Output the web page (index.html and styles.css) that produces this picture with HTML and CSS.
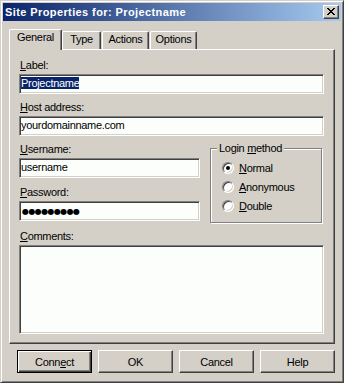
FILE: index.html
```html
<!DOCTYPE html>
<html lang="en">
<head>
    <meta charset="UTF-8">
    <title>Site Properties for: Projectname</title>
    <link rel="stylesheet" href="styles.css">
</head>
<body>
    <div class="window">
        <div class="titlebar">
            <span class="title">Site Properties for: Projectname</span>
            <span class="close-btn">
                <svg width="8" height="7" viewBox="0 0 8 7" shape-rendering="crispEdges">
                    <path d="M0 0h2v1H0z M6 0h2v1H6z M1 1h2v1H1z M5 1h2v1H5z M2 2h4v1H2z M3 3h2v1H3z M2 4h4v1H2z M1 5h2v1H1z M5 5h2v1H5z M0 6h2v1H0z M6 6h2v1H6z" fill="#000"/>
                </svg>
            </span>
        </div>

        <div class="tabs">
            <div class="tab active tab-general">General</div>
            <div class="tab tab-type">Type</div>
            <div class="tab tab-actions">Actions</div>
            <div class="tab tab-options">Options</div>
        </div>

        <div class="panel">
            <div class="field first">
                <div class="label"><u>L</u>abel:</div>
                <div class="edit"><span class="selected">Projectname</span></div>
            </div>
            <div class="field">
                <div class="label"><u>H</u>ost address:</div>
                <div class="edit">yourdomainname.com</div>
            </div>

            <div class="login-row">
                <div class="login-fields">
                    <div class="field first">
                        <div class="label"><u>U</u>sername:</div>
                        <div class="edit">username</div>
                    </div>
                    <div class="field password">
                        <div class="label"><u>P</u>assword:</div>
                        <div class="edit"><span class="dots">●●●●●●●●●</span></div>
                    </div>
                </div>
                <div class="group">
                    <span class="legend">Login <u>m</u>ethod</span>
                    <div class="radio-row"><span class="radio checked"></span><u>N</u>ormal</div>
                    <div class="radio-row"><span class="radio"></span><u>A</u>nonymous</div>
                    <div class="radio-row"><span class="radio"></span><u>D</u>ouble</div>
                </div>
            </div>

            <div class="field">
                <div class="label"><u>C</u>omments:</div>
                <div class="edit memo"></div>
            </div>
        </div>

        <div class="buttons">
            <div class="btn default">Conn<u>e</u>ct</div>
            <div class="btn">OK</div>
            <div class="btn">Cancel</div>
            <div class="btn">Help</div>
        </div>
    </div>
</body>
</html>
```

FILE: styles.css
```css
body {
    margin: 0;
    background: #d4d0c8;
    font-family: "Liberation Sans", Arial, sans-serif;
    font-size: 11px;
    letter-spacing: -0.3px;
    color: #000;
}
u {
    text-decoration: underline;
    text-underline-offset: 1px;
}
.window {
    width: 344px;
    height: 383px;
    box-sizing: border-box;
    border: 1px solid;
    border-color: #d4d0c8 #404040 #404040 #d4d0c8;
    box-shadow: inset 1px 1px #fff, inset -1px -1px #808080;
    padding: 2px;
    background: #d4d0c8;
}

/* title bar */
.titlebar {
    height: 18px;
    display: flex;
    align-items: center;
    justify-content: space-between;
    padding: 0 2px 0 2px;
    background: linear-gradient(to right, #0a246a, #a6caf0);
}
.title {
    color: #fff;
    font-weight: bold;
    letter-spacing: 0.4px;
}
.close-btn {
    width: 16px;
    height: 14px;
    box-sizing: border-box;
    border: 1px solid;
    border-color: #fff #404040 #404040 #fff;
    box-shadow: inset -1px -1px #808080;
    background: #d4d0c8;
    padding: 2px 0 0 3px;
}
.close-btn svg {
    display: block;
}

/* tabs */
.tabs {
    display: flex;
    align-items: flex-end;
    height: 20px;
    margin: 8px 6px 0;
}
.tab {
    height: 18px;
    box-sizing: border-box;
    border: 1px solid;
    border-color: #fff #404040 transparent #fff;
    border-bottom: none;
    border-radius: 2px 2px 0 0;
    box-shadow: inset -1px 0 #808080;
    text-align: center;
    line-height: 13px;
    padding-top: 1px;
}
.tab.active {
    height: 21px;
    margin-bottom: -1px;
    position: relative;
    z-index: 1;
    background: #d4d0c8;
}
.tab-general { width: 53px; }
.tab-type { width: 39px; }
.tab-actions { width: 47px; margin-left: 1px; }
.tab-options { width: 47px; margin-left: 1px; }

/* tab page */
.panel {
    height: 295px;
    box-sizing: border-box;
    margin: 0 6px;
    border: 1px solid;
    border-color: #fff #404040 #404040 #fff;
    box-shadow: inset -1px -1px #808080;
    padding: 9px 10px 0 9px;
}
.field {
    margin-top: 7px;
}
.field.first {
    margin-top: 0;
}
.field.password {
    margin-top: 8px;
}
.label {
    line-height: 13px;
    padding-left: 1px;
    margin-bottom: 2px;
}
.edit {
    height: 20px;
    box-sizing: border-box;
    border: 1px solid;
    border-color: #808080 #fff #fff #808080;
    box-shadow: inset 1px 1px #404040, inset -1px -1px #d4d0c8;
    background: #fcfefc;
    padding: 2px 1px;
    line-height: 13px;
    white-space: nowrap;
    overflow: hidden;
}
.edit.memo {
    height: 89px;
}
.selected {
    background: #0a246a;
    color: #fff;
}
.dots {
    font-family: "DejaVu Sans", sans-serif;
    font-size: 8px;
    letter-spacing: -0.6px;
    padding-left: 1px;
}

/* login method */
.login-row {
    display: flex;
    justify-content: space-between;
    margin-top: 7px;
}
.login-fields {
    width: 181px;
}
.group {
    width: 112px;
    height: 75px;
    margin: 5px 2px 0 0;
    position: relative;
    box-sizing: border-box;
    border: 1px solid #808080;
    box-shadow: 1px 1px #fff, inset 1px 1px #fff;
    padding: 9px 0 0 11px;
}
.legend {
    position: absolute;
    top: -7px;
    left: 6px;
    padding: 0 2px;
    line-height: 13px;
    background: #d4d0c8;
}
.radio-row {
    display: flex;
    align-items: center;
    height: 19px;
}
.radio {
    width: 12px;
    height: 12px;
    box-sizing: border-box;
    border-radius: 50%;
    border: 1px solid;
    border-color: #808080 #fff #fff #808080;
    box-shadow: inset 1px 1px #404040, inset -1px -1px #d4d0c8;
    background: #fff;
    margin-right: 5px;
    position: relative;
}
.radio.checked::after {
    content: "";
    position: absolute;
    left: 3px;
    top: 3px;
    width: 4px;
    height: 4px;
    border-radius: 50%;
    background: #000;
}

/* dialog buttons */
.buttons {
    display: flex;
    justify-content: flex-end;
    gap: 6px;
    margin: 6px 6px 0;
}
.btn {
    width: 75px;
    height: 23px;
    box-sizing: border-box;
    border: 1px solid;
    border-color: #fff #404040 #404040 #fff;
    box-shadow: inset -1px -1px #808080;
    display: flex;
    align-items: center;
    justify-content: center;
}
.btn.default {
    border-color: #000;
    box-shadow: inset 1px 1px #fff, inset -1px -1px #404040, inset -2px -2px #808080;
}
```
